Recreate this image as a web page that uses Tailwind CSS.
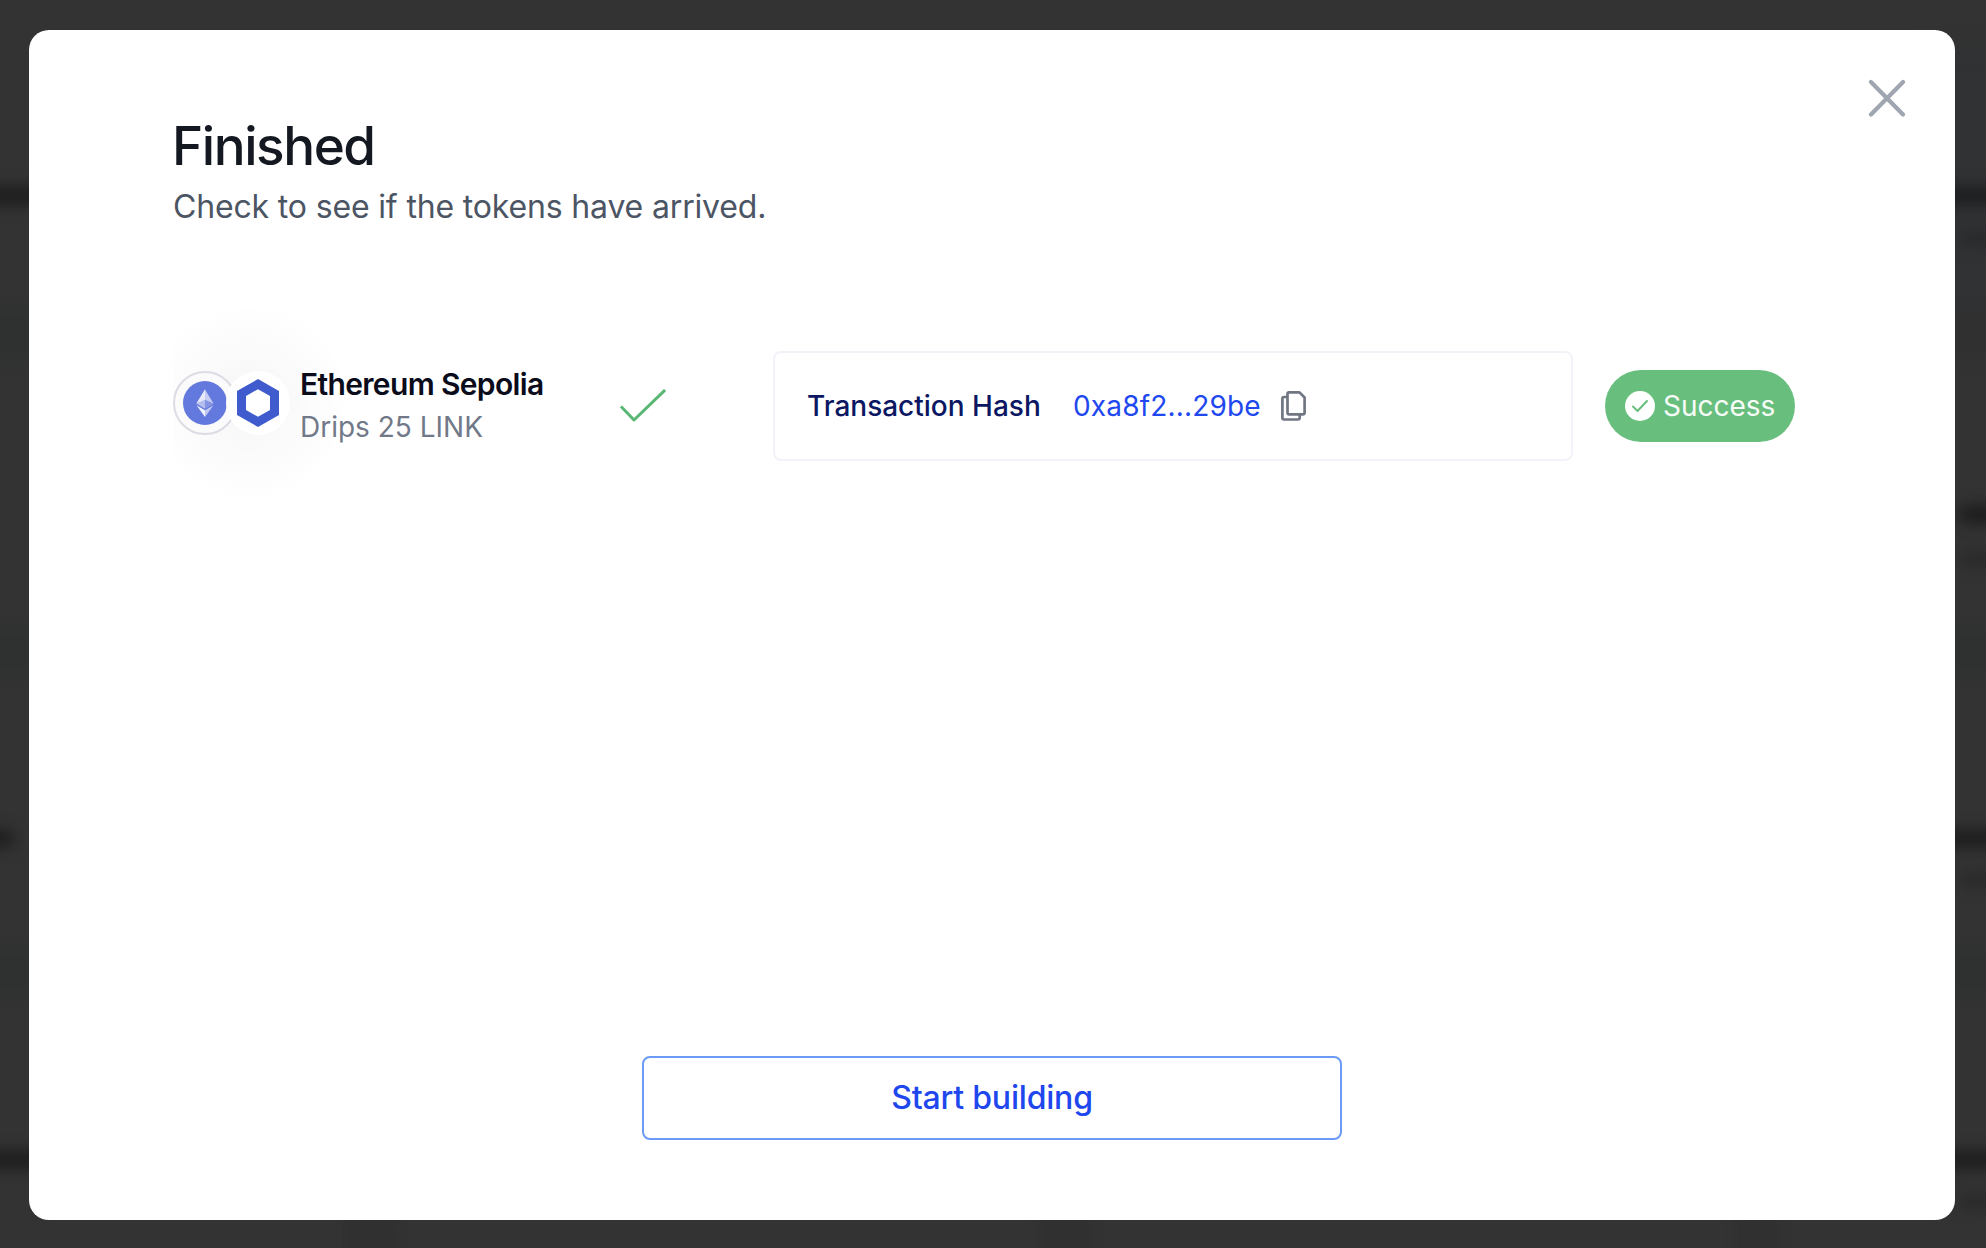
<!DOCTYPE html>
<html lang="en">
<head>
<meta charset="utf-8">
<title>Finished</title>
<script src="https://cdn.jsdelivr.net/npm/@tailwindcss/browser@4"></script>
</head>
<body class="relative h-[1248px] w-[1986px] overflow-hidden bg-[#333333] pt-[30px] pl-[29px] font-['Inter',sans-serif]">
  <!-- blurred page behind the dialog -->
  <div class="absolute inset-0 overflow-hidden">
    <div class="absolute -left-20 top-[310px] h-[50px] w-[220px] bg-[#2f3131] blur-[8px]"></div>
    <div class="absolute -left-20 top-[630px] h-[45px] w-[220px] bg-[#2f3131] blur-[8px]"></div>
    <div class="absolute -left-20 top-[950px] h-[45px] w-[220px] bg-[#2f3131] blur-[8px]"></div>
    <div class="absolute -left-20 top-[188px] h-[15px] w-[220px] bg-[#191919] blur-[8px]"></div>
    <div class="absolute -left-20 top-[831px] h-[15px] w-[93px] bg-[#191919] blur-[8px]"></div>
    <div class="absolute -left-20 top-[1152px] h-[15px] w-[220px] bg-[#191919] blur-[8px]"></div>
    <div class="absolute left-[1900px] top-[50px] h-[265px] w-[200px] bg-[#303234] blur-[10px]"></div>
    <div class="absolute left-[1900px] top-[315px] h-[40px] w-[200px] bg-[#303030] blur-[8px]"></div>
    <div class="absolute left-[1900px] top-[630px] h-[45px] w-[200px] bg-[#2f3131] blur-[8px]"></div>
    <div class="absolute left-[1900px] top-[950px] h-[45px] w-[200px] bg-[#2f3131] blur-[8px]"></div>
    <div class="absolute left-[1900px] top-[188px] h-[15px] w-[200px] bg-[#18191a] blur-[8px]"></div>
    <div class="absolute left-[1960px] top-[507px] h-[15px] w-[140px] bg-[#171717] blur-[8px]"></div>
    <div class="absolute left-[1900px] top-[831px] h-[15px] w-[200px] bg-[#191919] blur-[8px]"></div>
    <div class="absolute left-[1900px] top-[1152px] h-[15px] w-[200px] bg-[#191919] blur-[8px]"></div>
    <div class="absolute left-[1960px] top-[231px] h-[14px] w-[140px] bg-[#28292a] blur-[7px]"></div>
    <div class="absolute left-[1960px] top-[552px] h-[14px] w-[140px] bg-[#292929] blur-[7px]"></div>
    <div class="absolute left-[1960px] top-[873px] h-[14px] w-[140px] bg-[#292929] blur-[7px]"></div>
    <div class="absolute left-[1960px] top-[1195px] h-[14px] w-[140px] bg-[#292929] blur-[7px]"></div>
    <div class="absolute left-[345px] top-[1215px] h-[60px] w-[52px] bg-[#303030] blur-[5px]"></div>
    <div class="absolute left-[1040px] top-[1215px] h-[60px] w-[52px] bg-[#303030] blur-[5px]"></div>
    <div class="absolute left-[1735px] top-[1215px] h-[60px] w-[45px] bg-[#303030] blur-[5px]"></div>
  </div>

  <main class="relative flex h-[1190px] w-[1926px] flex-col rounded-[20px] bg-white pt-[84px] pl-[144px]">
    <button class="absolute top-[49px] right-[49px]" aria-label="Close">
      <svg class="block size-[38px]" viewBox="0 0 38 38" fill="none" stroke="#a0a6b0" stroke-width="4.2" stroke-linecap="round"><path d="M3 3 35 35.500M35 3 3 35.500"/></svg>
    </button>

    <h1 class="-ml-px h-[64px] text-[53px] leading-[65px] font-medium tracking-[-0.027em] text-[#141921]">Finished</h1>
    <p class="h-[58px] text-[32px] leading-[58px] tracking-[-0.005em] text-[#4c5564]">Check to see if the tokens have arrived.</p>

    <section class="mt-[60px] flex h-[220px] items-center">
      <div class="relative flex h-[220px] w-[127px] items-center">
        <!-- soft halo, cut at the column's left edge -->
        <div class="absolute top-0 left-0 h-[220px] w-[200px] bg-[radial-gradient(circle_at_76px_106px,rgba(0,0,0,0.03)_20px,rgba(0,0,0,0.016)_55px,rgba(0,0,0,0.006)_80px,transparent_100px)]"></div>
        <svg class="relative -mt-[6px] block h-[64px] w-[118px] shrink-0" viewBox="0 0 118 64">
          <circle cx="32" cy="32" r="31" fill="#fbfbfc" stroke="#dcdce5" stroke-width="2"/>
          <circle cx="32" cy="32" r="22" fill="#6479dd"/>
          <path d="M32 18.500 40.500 32.500 32 37.500 23.500 32.500Z" fill="#c5cdf3"/>
          <path d="M32 18.500V28.700L23.500 32.500Z" fill="#e6e9fa"/>
          <path d="M32 28.700 40.500 32.500 32 37.500Z" fill="#8494e3"/>
          <path d="M32 28.700V37.500L23.500 32.500Z" fill="#b4bff0"/>
          <path d="M23.500 34.300 32 39.200V46Z" fill="#f0f2fc"/>
          <path d="M40.500 34.300 32 39.200V46Z" fill="#c1c9f2"/>
          <circle cx="85" cy="32" r="32" fill="#fff"/>
          <path fill="#3f5bcd" fill-rule="evenodd" d="M85 8 106 20V44L85 56 64 44V20ZM85 18.200 73 25.100V38.900L85 45.800 97 38.900V25.100Z"/>
        </svg>
      </div>
      <div class="relative w-[320px] pb-px">
        <div class="h-[42px] text-[30px] leading-[41px] font-semibold tracking-[-0.022em] text-[#0a0c1b]">Ethereum Sepolia</div>
        <div class="h-[42px] text-[28px] leading-[42px] text-[#717989]">Drips 25 LINK</div>
      </div>
      <svg class="block h-[34px] w-[46px]" viewBox="0 0 46 34" fill="none" stroke="#59b673" stroke-width="3" stroke-linecap="square" stroke-linejoin="round"><path d="M2 18.500 14 31 44 2"/></svg>
      <div class="ml-[107px] flex h-[110px] w-[800px] items-center rounded-[8px] border-2 border-[#f2f3f9] pl-[32px] text-[28px]">
        <span class="w-[266px] font-medium text-[#0b1762]">Transaction Hash</span>
        <span class="w-[208px] tracking-[0.006em] text-[#2148ef]">0xa8f2...29be</span>
        <svg class="block h-[30px] w-[25px]" viewBox="0 0 25 30" fill="none" stroke="#717683" stroke-width="2.700" stroke-linejoin="round"><path d="M6.500 2.900Q6.500 1.400 8 1.400H18.500L23.600 6.500V21.500Q23.600 23.300 22 23.300H8Q6.500 23.300 6.500 21.500ZM6.500 6H3Q1.400 6 1.400 7.700V26.800Q1.400 28.500 3 28.500H17Q18.700 28.500 18.700 26.800V23.300"/></svg>
      </div>
      <div class="ml-[32px] flex h-[72px] w-[190px] items-center rounded-full bg-[#68bf7d] pl-[20px] text-[28px] text-[#f7fcf8]">
        <svg class="mr-[8px] block size-[30px]" viewBox="0 0 30 30" fill="none"><circle cx="15" cy="15" r="15" fill="#fff"/><path d="M8 15.500 12.500 20 22 10" stroke="#68bf7d" stroke-width="2" stroke-linecap="round" stroke-linejoin="round"/></svg>
        <span>Success</span>
      </div>
    </section>

    <button class="mt-[540px] ml-[469px] flex h-[84px] w-[700px] shrink-0 items-center justify-center rounded-[8px] border-2 border-[#6c9af6] text-[32px] font-medium tracking-[-0.006em] text-[#2046ee]">Start building</button>
  </main>
</body>
</html>
